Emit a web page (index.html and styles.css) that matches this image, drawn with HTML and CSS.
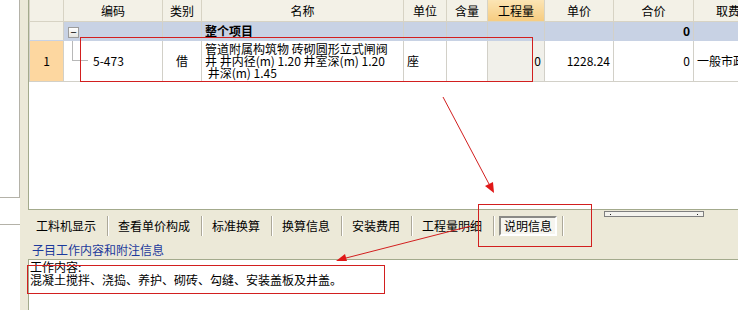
FILE: index.html
```html
<!DOCTYPE html>
<html lang="zh-CN">
<head>
    <meta charset="UTF-8">
    <title>说明信息</title>
    <link rel="stylesheet" href="styles.css">
</head>
<body>
    <div class="app">
        <div class="side">
            <div class="side-top"></div>
            <div class="side-mid"></div>
        </div>

        <div class="work">
            <div class="grid-panel">
                <table class="grid">
                    <colgroup>
                        <col style="width:34px"><col style="width:99px"><col style="width:39px">
                        <col style="width:202px"><col style="width:43px"><col style="width:41px">
                        <col style="width:57px"><col style="width:69px"><col style="width:80px">
                        <col style="width:90px">
                    </colgroup>
                    <thead>
                        <tr>
                            <th></th>
                            <th>编码</th>
                            <th>类别</th>
                            <th>名称</th>
                            <th>单位</th>
                            <th>含量</th>
                            <th class="hl">工程量</th>
                            <th>单价</th>
                            <th>合价</th>
                            <th class="left">取费专业</th>
                        </tr>
                    </thead>
                    <tbody>
                        <tr class="group">
                            <td class="num"></td>
                            <td><span class="toggle">−</span></td>
                            <td></td>
                            <td class="bold name">整个项目</td>
                            <td></td>
                            <td></td>
                            <td></td>
                            <td></td>
                            <td class="right bold">0</td>
                            <td></td>
                        </tr>
                        <tr class="item">
                            <td class="num sel">1</td>
                            <td class="code">
                                <div class="tree"><span class="elbow"></span><span>5-473</span></div>
                            </td>
                            <td class="center">借</td>
                            <td class="name">管道附属构筑物 砖砌圆形立式闸阀<br>井 井内径(m) 1.20 井室深(m) 1.20<br>&nbsp;井深(m) 1.45</td>
                            <td>座</td>
                            <td></td>
                            <td class="qty right">0</td>
                            <td class="right">1228.24</td>
                            <td class="right">0</td>
                            <td>一般市政工程</td>
                        </tr>
                    </tbody>
                </table>
            </div>

            <div class="tabs">
                <div class="tab">工料机显示</div>
                <div class="tab">查看单价构成</div>
                <div class="tab">标准换算</div>
                <div class="tab">换算信息</div>
                <div class="tab">安装费用</div>
                <div class="tab">工程量明细</div>
                <div class="tab active"><span>说明信息</span></div>
                <div class="hscroll"><i></i><i></i></div>
            </div>

            <div class="caption">子目工作内容和附注信息</div>

            <div class="detail">
                工作内容:<br>
                混凝土搅拌、浇捣、养护、砌砖、勾缝、安装盖板及井盖。
            </div>
        </div>
    </div>

    <!-- annotation marks drawn over the screenshot -->
    <svg class="marks" width="738" height="310" viewBox="0 0 738 310">
        <g fill="none" stroke="#d21f1f" stroke-width="1">
            <rect x="80.5" y="37.5" width="452" height="44"/>
            <rect x="478.5" y="204.5" width="113" height="42"/>
            <rect x="27.5" y="265.5" width="357" height="28"/>
            <line x1="443" y1="97" x2="489" y2="184"/>
            <line x1="471" y1="226" x2="346" y2="258"/>
        </g>
        <g fill="#e01818">
            <polygon points="494,193 485,186 493,182"/>
            <polygon points="336,261 345,254 347,261"/>
        </g>
    </svg>
</body>
</html>
```

FILE: styles.css
```css
body {
    margin: 0;
    width: 738px;
    height: 310px;
    overflow: hidden;
    position: relative;
    background: #fff;
    font-family: "Noto Sans CJK SC", sans-serif;
    font-size: 12px;
    color: #000;
}
.app {
    display: flex;
    height: 310px;
}
.side {
    width: 20px;
    flex: none;
    display: flex;
    flex-direction: column;
}
.side-top {
    height: 198px;
    box-sizing: border-box;
    border-right: 1px solid #b4b2a8;
    border-bottom: 1px solid #b4b2a8;
}
.side-mid {
    height: 27px;
    box-sizing: border-box;
    border-bottom: 1px solid #b4b2a8;
}
.work {
    flex: 1;
    min-width: 0;
    background: #ece9d8;
    padding-left: 8px;
    display: flex;
    flex-direction: column;
}
.grid-panel {
    height: 210px;
    flex: none;
    box-sizing: border-box;
    background: #fff;
    border-left: 1px solid #a3aa8c;
    border-bottom: 1px solid #a3aa8c;
    overflow: hidden;
}
.grid {
    border-collapse: collapse;
    table-layout: fixed;
    width: 754px;
}
.grid th {
    height: 21px;
    padding: 0;
    font-weight: normal;
    background: #f3f1e7;
    border: 1px solid #d7d3c4;
    border-top: none;
    line-height: 20px;
}
.grid th.hl {
    background: linear-gradient(#fbe4b4, #f6cc80);
}
.grid th.left {
    text-align: left;
    padding-left: 22px;
}
.grid td {
    padding: 0 3px;
    border: 1px solid #d2d0c8;
    white-space: nowrap;
    overflow: hidden;
    line-height: 12px;
}
.group td {
    height: 18px;
    background: #c8d2e4;
    border-color: #c8d2e4 #d2d0c8;
}
.group td.num {
    background: #f3f1e7;
}
.item td {
    height: 39px;
}
.item td.num {
    background: #fdd7a0;
}
.num {
    text-align: center;
}
.center {
    text-align: center;
}
.right {
    text-align: right;
}
.bold {
    font-weight: bold;
}
.name {
    padding-left: 2px;
}
.qty {
    background: #f1f0ea;
}
.toggle {
    display: inline-block;
    width: 9px;
    height: 9px;
    margin-left: 1px;
    border: 1px solid #9c9c9c;
    background: linear-gradient(#fff, #e4e4e0);
    line-height: 8px;
    text-align: center;
    font-size: 11px;
    vertical-align: middle;
}
.grid td.code {
    padding: 0;
    vertical-align: top;
}
.tree {
    height: 40px;
    display: flex;
    align-items: center;
}
.elbow {
    align-self: flex-start;
    width: 16px;
    height: 20px;
    margin-left: 8px;
    margin-right: 5px;
    box-sizing: border-box;
    border-left: 1px solid #b8b8b8;
    border-bottom: 1px solid #b8b8b8;
}
.tabs {
    height: 30px;
    flex: none;
    display: flex;
    align-items: center;
    padding-top: 2px;
    box-sizing: border-box;
}
.tab {
    height: 20px;
    line-height: 20px;
    padding: 0 11px 0 10px;
    border-right: 1px solid #aca899;
    box-shadow: 1px 0 #fff;
}
.tab:first-child {
    padding-left: 8px;
}
.tab.active {
    padding-left: 5px;
    padding-right: 5px;
}
.tab.active span {
    display: block;
    height: 16px;
    line-height: 16px;
    padding: 0 3px;
    border: 2px solid;
    border-color: #8a8a86 #fff #fff #8a8a86;
    background: #f6f5ef;
}
.hscroll {
    align-self: flex-start;
    margin-top: -1px;
    margin-left: 41px;
    width: 100px;
    height: 6px;
    box-sizing: border-box;
    border: 1px solid #7f7f7f;
    background: #f4f3ee;
    display: flex;
    justify-content: space-between;
    align-items: center;
    padding: 0 5px;
}
.hscroll i {
    width: 1px;
    height: 1px;
    background: #222;
}
.caption {
    height: 19px;
    line-height: 19px;
    padding-left: 4px;
    color: #1c3a9c;
    flex: none;
}
.detail {
    flex: 1;
    background: #fff;
    border-top: 1px solid #a3aa8c;
    border-left: 1px solid #a3aa8c;
    padding: 0 1px;
    line-height: 13px;
}
.marks {
    position: absolute;
    top: 0;
    left: 0;
    pointer-events: none;
}
```
